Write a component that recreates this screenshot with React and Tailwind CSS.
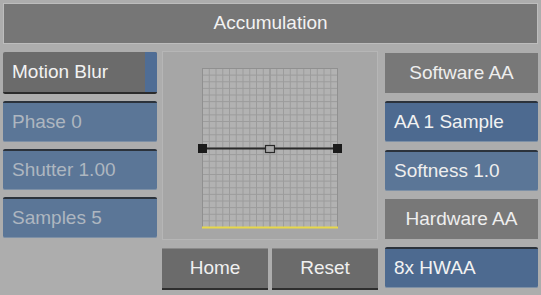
import React from 'react';

const font = { fontFamily: '"Liberation Sans", Arial, sans-serif' };

function Field({ children, active }) {
  return (
    <div
      className={`h-[41px] flex items-center pl-[9px] text-[19px] rounded-[2px] border-t-2 border-[#2b323b] border-b border-b-[#7d90a6] ${
        active ? 'bg-[#4d6a90] text-[#f2f2f2]' : 'bg-[#5b7697] text-[#aeb6c0]'
      }`}
    >
      {children}
    </div>
  );
}

function Label({ children }) {
  return (
    <div className="h-[40px] flex items-center justify-center bg-[#787878] text-[19px] text-[#eeeeee]">
      {children}
    </div>
  );
}

function Button({ children }) {
  return (
    <div className="flex-1 h-[42px] flex items-center justify-center bg-[#6b6b6b] border-t border-t-[#8a8a8a] border-b-2 border-b-[#2e2e2e] text-[19px] text-[#f0f0f0]">
      {children}
    </div>
  );
}

function Curve() {
  const w = 136;
  const h = 160;
  const cols = 20;
  const rows = 24;
  const v = [];
  for (let i = 0; i <= cols; i++) {
    const x = 0.5 + (i * (w - 1)) / cols;
    v.push(<line key={'v' + i} x1={x} y1={0} x2={x} y2={h} stroke={i === 10 ? '#888' : '#9c9c9c'} strokeWidth="1" />);
  }
  for (let j = 0; j <= rows; j++) {
    const y = 0.5 + (j * (h - 1)) / rows;
    v.push(<line key={'h' + j} x1={0} y1={y} x2={w} y2={y} stroke="#9c9c9c" strokeWidth="1" />);
  }
  return (
    <svg width={w + 10} height={h + 2} viewBox={`-5 0 ${w + 10} ${h + 2}`}>
      <rect x="0" y="0" width={w} height={h} fill="#b2b2b2" />
      {v}
      <rect x="0.5" y="0.5" width={w - 1} height={h - 1} fill="none" stroke="#909090" />
      <line x1="0" y1={h - 0.5} x2={w} y2={h - 0.5} stroke="#e7d84a" strokeWidth="2" />
      <line x1="0" y1="80.5" x2={w} y2="80.5" stroke="#2a2a2a" strokeWidth="2" />
      <rect x="-4" y="76" width="9" height="9" fill="#1a1a1a" />
      <rect x={w - 5} y="76" width="9" height="9" fill="#1a1a1a" />
      <rect x="63.5" y="77.5" width="9" height="7" fill="#a8a8a8" stroke="#2a2a2a" strokeWidth="1.2" />
    </svg>
  );
}

export default function App() {
  return (
    <div style={font} className="w-[541px] h-[295px] bg-[#adadad] overflow-hidden pt-[3px] px-[3px]">
      <div className="h-[41px] flex items-center justify-center bg-[#767676] border border-[#bdbdbd] text-[19px] text-[#f2f2f2]">
        Accumulation
      </div>

      <div className="flex mt-[7px]">
        {/* left column */}
        <div className="w-[154px] flex flex-col gap-[7px] pt-[1px]">
          <div className="h-[42px] flex bg-[#6b6b6b] border-b-2 border-b-[#2b2b2b] rounded-[2px] overflow-hidden">
            <div className="flex-1 flex items-center pl-[9px] text-[19px] text-[#f2f2f2]">Motion Blur</div>
            <div className="w-[12px] bg-[#4f6d95]" />
          </div>
          <Field>Phase 0</Field>
          <Field>Shutter 1.00</Field>
          <Field>Samples 5</Field>
        </div>

        {/* center */}
        <div className="w-[216px] ml-[5px] flex flex-col">
          <div className="h-[189px] bg-[#a6a6a6] border border-[#b6b6b6] flex justify-center pt-[16px]">
            <Curve />
          </div>
          <div className="flex gap-[4px] mt-[8px]">
            <Button>Home</Button>
            <Button>Reset</Button>
          </div>
        </div>

        {/* right column */}
        <div className="w-[153px] ml-[7px] flex flex-col gap-[8px] pt-[2px]">
          <Label>Software AA</Label>
          <Field active>AA 1 Sample</Field>
          <Field>
            <span className="text-[#eeeeee]">Softness 1.0</span>
          </Field>
          <Label>Hardware AA</Label>
          <Field active>8x HWAA</Field>
        </div>
      </div>
    </div>
  );
}
